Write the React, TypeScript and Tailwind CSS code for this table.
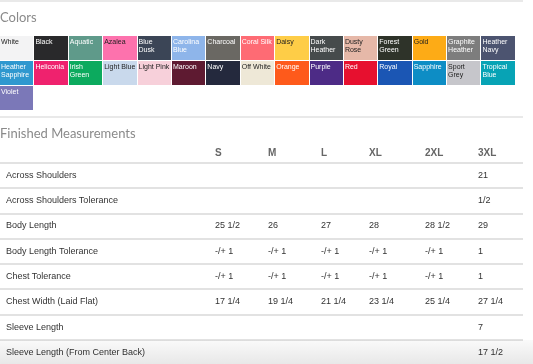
const SWATCHES: { name: string; bg: string; dark?: boolean }[] = [
  { name: 'White', bg: '#f3f3f4', dark: true },
  { name: 'Black', bg: '#29292b' },
  { name: 'Aquatic', bg: '#5f9a8a' },
  { name: 'Azalea', bg: '#fd72ad', dark: true },
  { name: 'Blue Dusk', bg: '#3b4556' },
  { name: 'Carolina Blue', bg: '#8eb5ea' },
  { name: 'Charcoal', bg: '#6a6863' },
  { name: 'Coral Silk', bg: '#fe6b74' },
  { name: 'Daisy', bg: '#fecd47', dark: true },
  { name: 'Dark Heather', bg: '#464b4c' },
  { name: 'Dusty Rose', bg: '#e6b8a8', dark: true },
  { name: 'Forest Green', bg: '#2e3329' },
  { name: 'Gold', bg: '#fdab16', dark: true },
  { name: 'Graphite Heather', bg: '#7d7d7d' },
  { name: 'Heather Navy', bg: '#4c5470' },
  { name: 'Heather Sapphire', bg: '#2f98cf' },
  { name: 'Heliconia', bg: '#ef226e' },
  { name: 'Irish Green', bg: '#0caa5e' },
  { name: 'Light Blue', bg: '#c9d9ec', dark: true },
  { name: 'Light Pink', bg: '#f7d0da', dark: true },
  { name: 'Maroon', bg: '#5e1a31' },
  { name: 'Navy', bg: '#24293d' },
  { name: 'Off White', bg: '#eee8d7', dark: true },
  { name: 'Orange', bg: '#fe5a1b' },
  { name: 'Purple', bg: '#4d2b86' },
  { name: 'Red', bg: '#e7102f' },
  { name: 'Royal', bg: '#1b56b4' },
  { name: 'Sapphire', bg: '#0d8dc5' },
  { name: 'Sport Grey', bg: '#c6c6cb', dark: true },
  { name: 'Tropical Blue', bg: '#07a3b5' },
  { name: 'Violet', bg: '#7b78b8' },
]

const SIZES = ['S', 'M', 'L', 'XL', '2XL', '3XL']

const ROWS: { label: string; values: string[] }[] = [
  { label: 'Across Shoulders', values: ['', '', '', '', '', '21'] },
  { label: 'Across Shoulders Tolerance', values: ['', '', '', '', '', '1/2'] },
  { label: 'Body Length', values: ['25 1/2', '26', '27', '28', '28 1/2', '29'] },
  { label: 'Body Length Tolerance', values: ['-/+ 1', '-/+ 1', '-/+ 1', '-/+ 1', '-/+ 1', '1'] },
  { label: 'Chest Tolerance', values: ['-/+ 1', '-/+ 1', '-/+ 1', '-/+ 1', '-/+ 1', '1'] },
  { label: 'Chest Width (Laid Flat)', values: ['17 1/4', '19 1/4', '21 1/4', '23 1/4', '25 1/4', '27 1/4'] },
  { label: 'Sleeve Length', values: ['', '', '', '', '', '7'] },
  { label: 'Sleeve Length (From Center Back)', values: ['', '', '', '', '', '17 1/2'] },
]

// column widths after the label column
const COLS = ['w-[53px]', 'w-[53px]', 'w-[48px]', 'w-[56px]', 'w-[53px]', 'w-[45px]']

export default function App() {
  return (
    <div className="w-[533px] h-[364px] overflow-hidden bg-white relative font-['Liberation_Sans',Arial,sans-serif]">
      <div className="w-[523px] border-t-2 border-[#e9e9e9]" />

      {/* Colors */}
      <h2 className="mt-[7px] h-[27px] text-[13px] leading-[16px] text-[#8a8a8a] font-['Lato',sans-serif]">
        Colors
      </h2>
      <div className="grid grid-cols-[repeat(15,33.4px)] gap-x-[1px] gap-y-[1px]">
        {SWATCHES.map((s) => (
          <div
            key={s.name}
            className={`h-[24px] px-[1px] pt-[2px] text-[7px] leading-[8px] ${s.dark ? 'text-[#1e1e1e]' : 'text-white'}`}
            style={{ backgroundColor: s.bg }}
          >
            {s.name}
          </div>
        ))}
      </div>

      {/* Finished Measurements */}
      <div className="mt-[6px] w-[523px] border-t-2 border-[#e9e9e9]" />
      <h2 className="mt-[7px] text-[13px] leading-[16px] text-[#8a8a8a] font-['Lato',sans-serif]">
        Finished Measurements
      </h2>

      <div className="w-[523px] text-[9px] text-[#333]">
        <div className="flex items-center h-[21px] pt-[2px] font-bold text-[10px] text-[#666]">
          <div className="w-[215px]" />
          {SIZES.map((s, i) => (
            <div key={s} className={COLS[i]}>
              {s}
            </div>
          ))}
        </div>
        {ROWS.map((r) => (
          <div key={r.label} className="flex items-center h-[25.3px] border-t-2 border-[#e2e2e2]">
            <div className="w-[215px] pl-[6px]">{r.label}</div>
            {r.values.map((v, i) => (
              <div key={i} className={COLS[i]}>
                {v}
              </div>
            ))}
          </div>
        ))}
      </div>
      <div className="absolute left-0 right-0 bottom-0 h-[24px] bg-gradient-to-b from-[#fafafa] to-[#e8e8e8] pointer-events-none mix-blend-multiply" />
    </div>
  )
}
